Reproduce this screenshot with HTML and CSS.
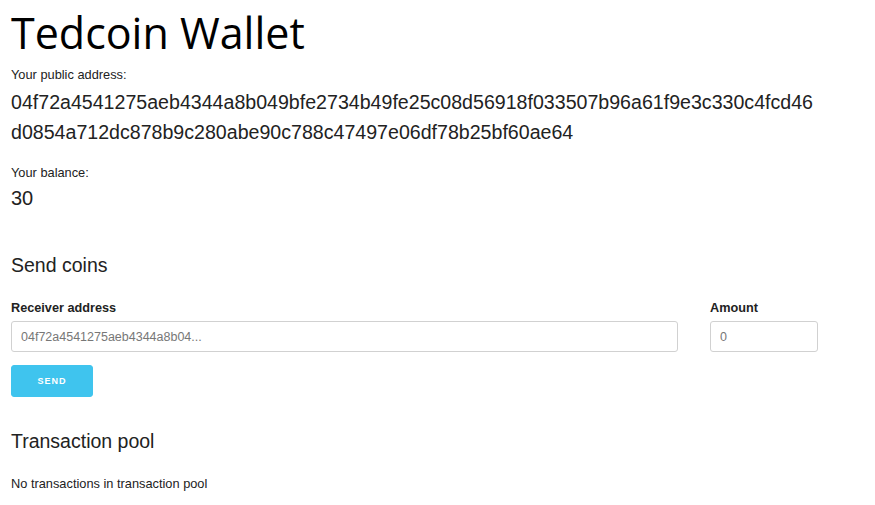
FILE: index.html
```html
<!DOCTYPE html>
<html>
<head>
<meta charset="utf-8">
<link rel="stylesheet" href="styles.css">
</head>
<body>
<div class="page">
  <h1 class="title">Tedcoin Wallet</h1>
  <div class="label">Your public address:</div>
  <div class="address">04f72a4541275aeb4344a8b049bfe2734b49fe25c08d56918f033507b96a61f9e3c330c4fcd46d0854a712dc878b9c280abe90c788c47497e06df78b25bf60ae64</div>
  <div class="label balance-label">Your balance:</div>
  <div class="balance">30</div>

  <h2 class="section">Send coins</h2>
  <div class="form-row">
    <div class="field receiver">
      <label class="field-label">Receiver address</label>
      <input class="input" type="text" placeholder="04f72a4541275aeb4344a8b04...">
    </div>
    <div class="field amount">
      <label class="field-label">Amount</label>
      <input class="input" type="text" placeholder="0">
    </div>
  </div>
  <button class="send">SEND</button>

  <h2 class="section pool">Transaction pool</h2>
  <div class="empty">No transactions in transaction pool</div>
</div>
</body>
</html>
```
FILE: styles.css
```css
html, body {
  margin: 0;
  padding: 0;
  background: #fff;
}
body {
  font-family: "Liberation Sans", Arial, sans-serif;
  color: #222;
}
.page {
  padding: 0 11px;
}
.title {
  font-family: "Open Sans", "Noto Sans", sans-serif;
  font-weight: 400;
  font-size: 43px;
  line-height: 50px;
  margin: 8px 0 0 0;
  color: #000;
}
.label {
  font-size: 12.8px;
  line-height: 16px;
  margin-top: 9px;
}
.address {
  font-size: 19.6px;
  line-height: 30px;
  width: 806px;
  word-break: break-all;
  margin-top: 4px;
}
.balance-label {
  margin-top: 18px;
}
.balance {
  font-size: 20px;
  line-height: 26px;
  margin-top: 4px;
}
.section {
  font-weight: 400;
  font-size: 19.5px;
  line-height: 26px;
  margin: 41px 0 0 0;
}
.form-row {
  display: flex;
  gap: 32px;
  margin-top: 22px;
}
.field {
  display: flex;
  flex-direction: column;
}
.receiver {
  width: 667px;
}
.amount {
  width: 108px;
}
.field-label {
  font-size: 12.7px;
  font-weight: 700;
  line-height: 16px;
  margin-bottom: 5px;
}
.input {
  box-sizing: border-box;
  height: 31px;
  border: 1px solid #d1d1d1;
  border-radius: 3px;
  padding: 0 9px;
  font-family: "Liberation Sans", Arial, sans-serif;
  font-size: 12.5px;
  width: 100%;
}
.input::placeholder {
  color: #777;
}
.send {
  display: block;
  margin-top: 13px;
  width: 82px;
  height: 32px;
  background: #3fc4ee;
  border: 1px solid #3fc4ee;
  border-radius: 3px;
  color: #fff;
  font-family: "Liberation Sans", Arial, sans-serif;
  font-weight: 700;
  font-size: 9px;
  letter-spacing: 1px;
}
.pool {
  margin-top: 31px;
}
.empty {
  font-size: 12.8px;
  line-height: 16px;
  margin-top: 22px;
}
```
